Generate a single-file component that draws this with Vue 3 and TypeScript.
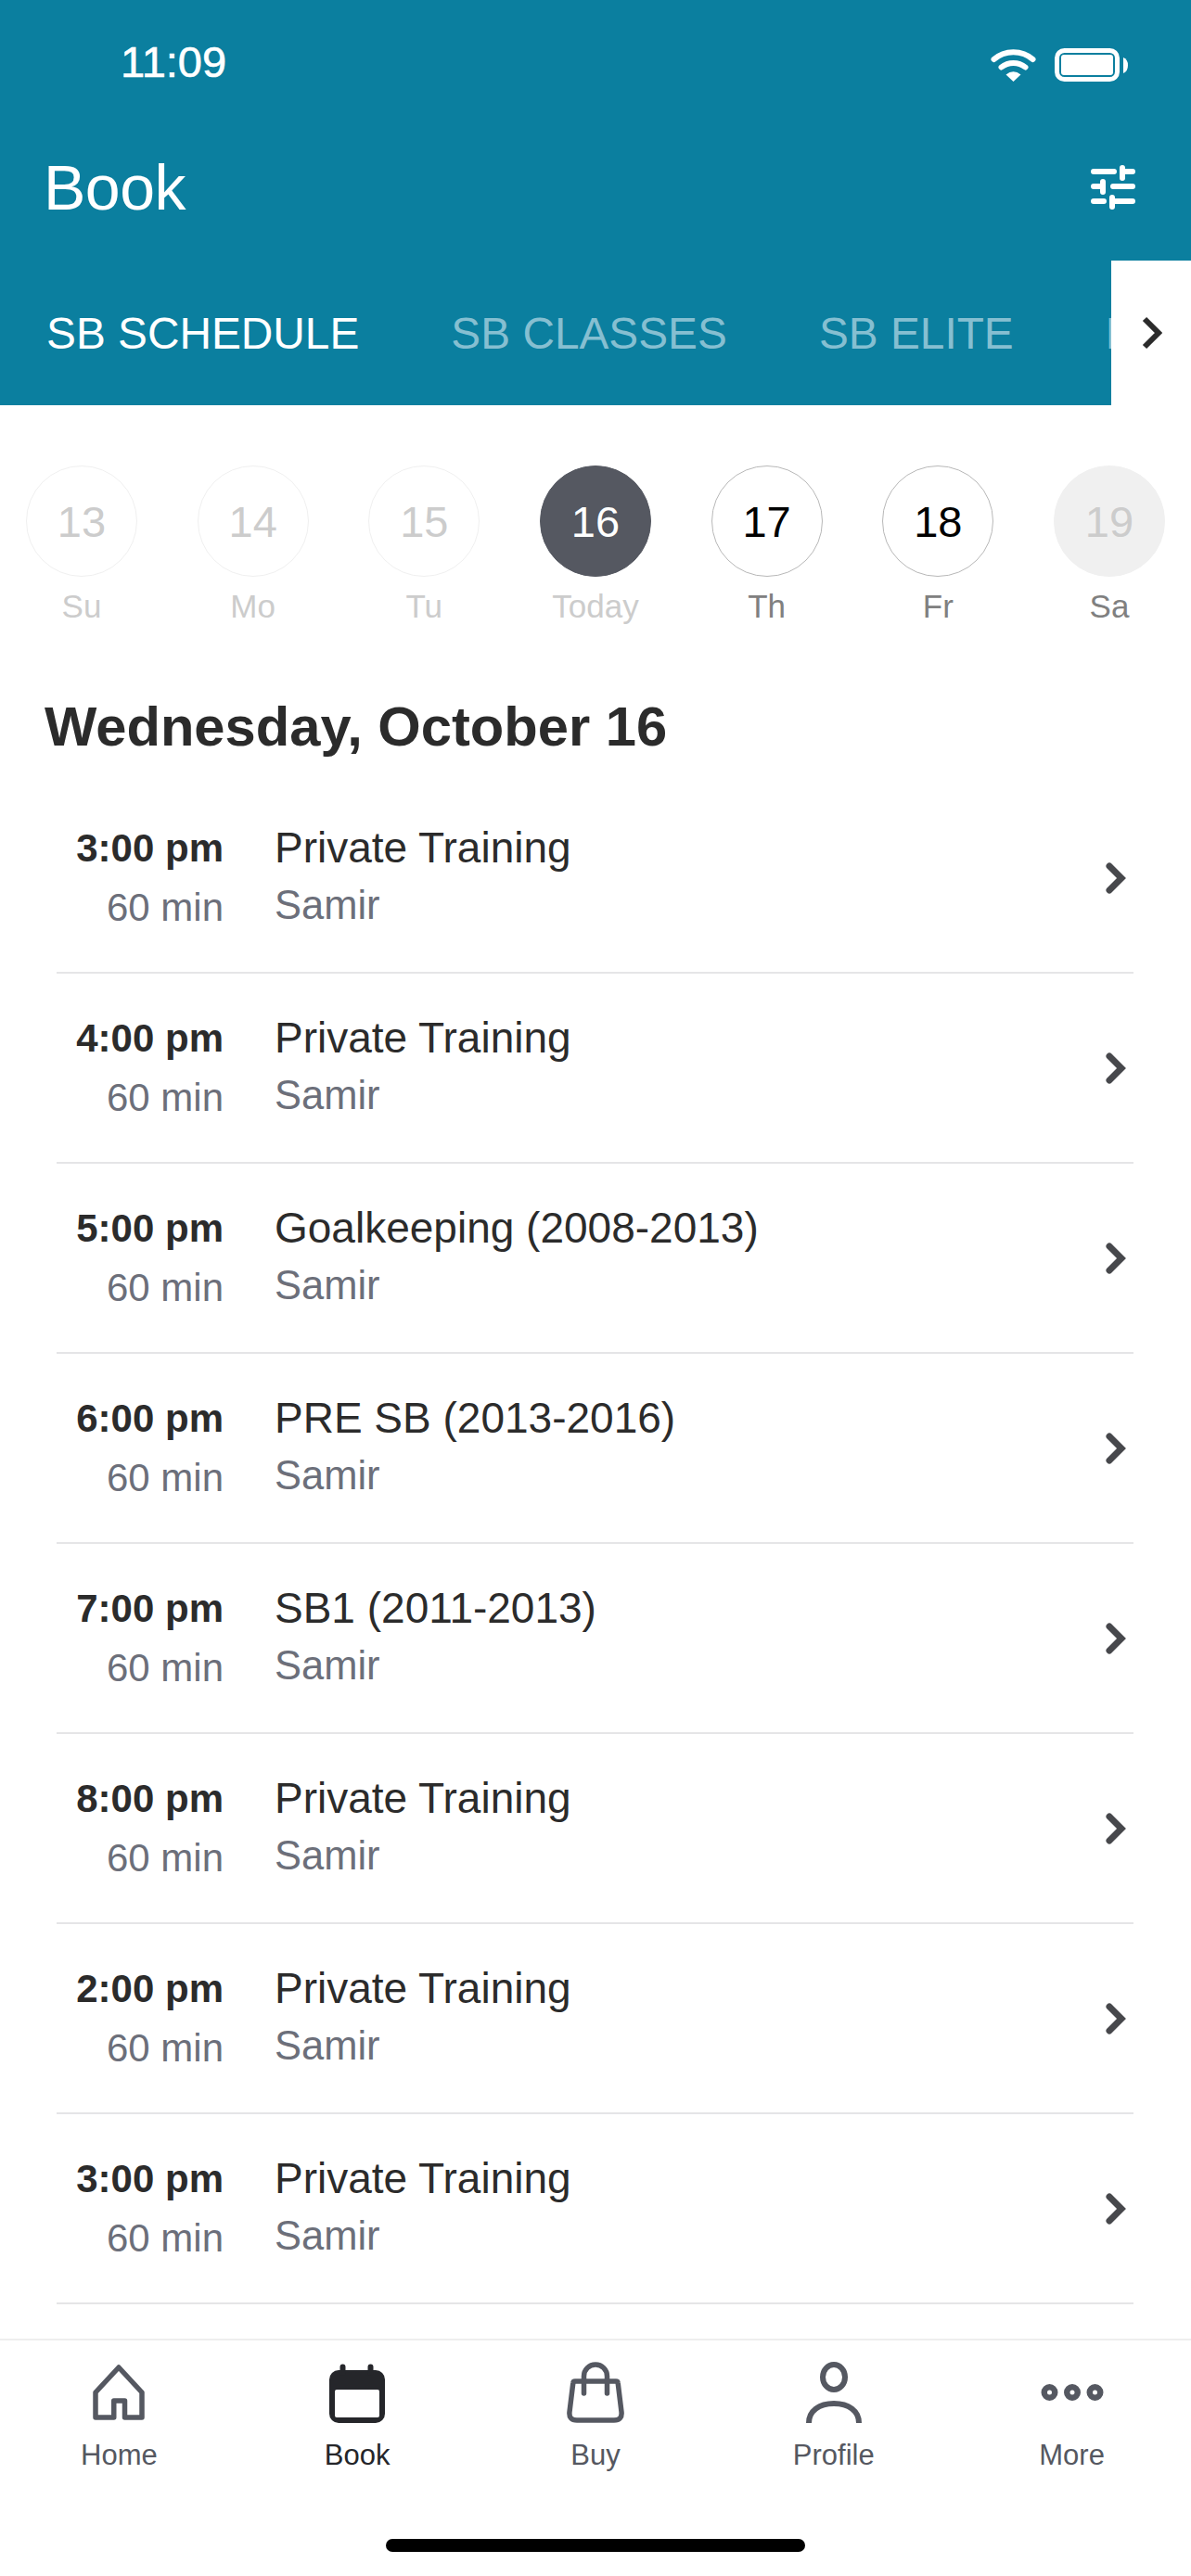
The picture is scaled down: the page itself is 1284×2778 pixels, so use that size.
<script setup lang="ts">
interface Day { num: number; label: string; state: 'past' | 'today' | 'future' | 'off' }
interface Session { time: string; title: string }

const tabs: string[] = ['SB SCHEDULE', 'SB CLASSES', 'SB ELITE', 'PRIVATE']
const days: Day[] = [
  { num: 13, label: 'Su', state: 'past' },
  { num: 14, label: 'Mo', state: 'past' },
  { num: 15, label: 'Tu', state: 'past' },
  { num: 16, label: 'Today', state: 'today' },
  { num: 17, label: 'Th', state: 'future' },
  { num: 18, label: 'Fr', state: 'future' },
  { num: 19, label: 'Sa', state: 'off' }
]
const sessions: Session[] = [
  { time: '3:00 pm', title: 'Private Training' },
  { time: '4:00 pm', title: 'Private Training' },
  { time: '5:00 pm', title: 'Goalkeeping (2008-2013)' },
  { time: '6:00 pm', title: 'PRE SB (2013-2016)' },
  { time: '7:00 pm', title: 'SB1 (2011-2013)' },
  { time: '8:00 pm', title: 'Private Training' },
  { time: '2:00 pm', title: 'Private Training' },
  { time: '3:00 pm', title: 'Private Training' }
]
</script>

<template>
  <div class="app">
    <header class="header">
      <div class="status">
        <span class="clock">11:09</span>
        <div class="status-icons">
          <svg width="49" height="36" viewBox="0 0 49 36" fill="none">
            <path d="M3.5 12 C15 1.5 34 1.5 45.5 12" stroke="#fff" stroke-width="6" stroke-linecap="round" />
            <path d="M11.5 20.5 C19 14.5 30 14.5 37.5 20.5" stroke="#fff" stroke-width="6" stroke-linecap="round" />
            <path d="M24.5 36 L16.5 28.5 Q24.5 22 32.5 28.5 Z" fill="#fff" />
          </svg>
          <svg width="79" height="36" viewBox="0 0 79 36" fill="none">
            <rect x="2.5" y="2.5" width="65" height="31" rx="8" stroke="#fff" stroke-width="5" />
            <rect x="7" y="7" width="56" height="22" rx="3" fill="#fff" />
            <path d="M74 10 Q79 12 79 18.5 Q79 25 74 27 Z" fill="#fff" />
          </svg>
        </div>
      </div>
      <div class="title-row">
        <h1 class="title">Book</h1>
        <svg width="48" height="48" viewBox="0 0 48 48" fill="none" stroke="#fff" stroke-width="6" stroke-linecap="round">
          <path d="M3 7 H25 M34 3 V14 M34 7 H45" />
          <path d="M3 23 H12 M13 18 V29 M24 23 H45" />
          <path d="M3 39 H14 M23 35 V45 M23 39 H45" />
        </svg>
      </div>
      <nav class="tabs">
        <span v-for="(tab, i) in tabs" :key="tab" class="tab" :class="{ active: i === 0 }">{{ tab }}</span>
        <div class="tabs-more">
          <svg width="22" height="36" viewBox="0 0 22 36" fill="none">
            <path d="M3 3 L18 18 L3 33" stroke="#2b2b2b" stroke-width="6" />
          </svg>
        </div>
      </nav>
    </header>

    <main class="content">
      <div class="days">
        <div v-for="day in days" :key="day.num" class="day" :class="day.state">
          <div class="circle">{{ day.num }}</div>
          <div class="day-label">{{ day.label }}</div>
        </div>
      </div>

      <h2 class="date">Wednesday, October 16</h2>

      <ul class="list">
        <li v-for="(s, i) in sessions" :key="i" class="row">
          <div class="when">
            <div class="time">{{ s.time }}</div>
            <div class="dur">60 min</div>
          </div>
          <div class="what">
            <div class="name">{{ s.title }}</div>
            <div class="coach">Samir</div>
          </div>
          <svg class="chev" width="22" height="34" viewBox="0 0 22 34" fill="none">
            <path d="M4 4 L17 17 L4 30" stroke="#47484c" stroke-width="7" stroke-linecap="round" stroke-linejoin="miter" />
          </svg>
        </li>
      </ul>
    </main>

    <footer class="nav">
      <div class="nav-items">
        <div class="nav-item">
          <svg width="60" height="66" viewBox="0 0 60 66" fill="none" stroke="#555861" stroke-width="5.5" stroke-linejoin="round">
            <path d="M5 33 L30 6 L55 33 V60 H36.5 V42 H24.75 V60 H5 Z" />
          </svg>
          <span>Home</span>
        </div>
        <div class="nav-item current">
          <svg width="60" height="66" viewBox="0 0 60 66">
            <rect x="0" y="9" width="60" height="57" rx="10" fill="#25262a" />
            <rect x="6" y="30" width="48" height="30" rx="2" fill="#fff" />
            <path d="M14.5 5.5 V12 M44.5 5.5 V12" stroke="#25262a" stroke-width="6" stroke-linecap="round" />
          </svg>
          <span>Book</span>
        </div>
        <div class="nav-item">
          <svg width="62" height="66" viewBox="0 0 62 66" fill="none" stroke="#555861" stroke-width="5.5" stroke-linecap="round" stroke-linejoin="round">
            <path d="M9 21 H53 Q55 21 55.2 23 L59 54 Q60 63 51 63 H11 Q2 63 3 54 L6.8 23 Q7 21 9 21 Z" />
            <path d="M18.5 34 V15.5 a12.5 12.5 0 0 1 25 0 V34" />
          </svg>
          <span>Buy</span>
        </div>
        <div class="nav-item">
          <svg width="60" height="66" viewBox="0 0 60 66" fill="none" stroke="#555861" stroke-width="6">
            <ellipse cx="30" cy="16.5" rx="12" ry="13.5" />
            <path d="M3 66 C3 53 14 45 30 45 C46 45 57 53 57 66" />
          </svg>
          <span>Profile</span>
        </div>
        <div class="nav-item">
          <svg width="68" height="66" viewBox="0 0 68 66" fill="none" stroke="#555861" stroke-width="6.5">
            <circle cx="9.5" cy="33" r="5.75" />
            <circle cx="34" cy="33" r="5.75" />
            <circle cx="58.5" cy="33" r="5.75" />
          </svg>
          <span>More</span>
        </div>
      </div>
      <div class="home-bar"></div>
    </footer>
  </div>
</template>

<style scoped>
.app {
  width: 1284px;
  height: 2778px;
  display: flex;
  flex-direction: column;
  overflow: hidden;
  background: #fff;
  font-family: "Liberation Sans", Arial, sans-serif;
  color: #2b2b2b;
}

.header {
  flex: none;
  background: #0b7f9f;
  color: #fff;
}
.status {
  height: 130px;
  padding: 2px 68px 0 130px;
  box-sizing: border-box;
  display: flex;
  align-items: center;
  justify-content: space-between;
}
.clock {
  font-size: 47px;
  -webkit-text-stroke: 0.6px #fff;
}
.status-icons {
  display: flex;
  align-items: center;
  gap: 20px;
  margin-top: 8px;
}
.title-row {
  height: 151px;
  box-sizing: border-box;
  padding: 0 60px 8px 47px;
  display: flex;
  align-items: center;
  justify-content: space-between;
}
.title {
  margin: 0;
  font-size: 68px;
  letter-spacing: -0.5px;
  font-weight: 400;
}
.tabs {
  position: relative;
  height: 156px;
  box-sizing: border-box;
  padding-left: 50px;
  display: flex;
  align-items: center;
  gap: 99px;
  overflow: hidden;
  white-space: nowrap;
}
.tab {
  font-size: 47.8px;
  color: #86bfd1;
}
.tab.active {
  color: #fff;
}
.tabs-more {
  position: absolute;
  top: 0;
  right: 0;
  bottom: 0;
  width: 86px;
  background: #fff;
  display: flex;
  align-items: center;
  padding-left: 33px;
  box-sizing: border-box;
}

.content {
  flex: 1;
  min-height: 0;
  overflow: hidden;
}
.days {
  padding: 65px 28px 0;
  display: flex;
  justify-content: space-between;
}
.day {
  width: 120px;
  display: flex;
  flex-direction: column;
  align-items: center;
}
.circle {
  width: 120px;
  height: 120px;
  box-sizing: border-box;
  border-radius: 50%;
  border: 1.5px solid #f0f0f0;
  display: flex;
  align-items: center;
  justify-content: center;
  font-size: 47px;
  color: #cccccc;
}
.day-label {
  margin-top: 12px;
  font-size: 35px;
  line-height: 40px;
  color: #cccccc;
}
.today .circle {
  background: #555861;
  border-color: #555861;
  color: #fff;
}
.future .circle {
  border-color: #b8b8b8;
  color: #000;
}
.off .circle {
  background: #f0f0f0;
  border-color: #f0f0f0;
}
.future .day-label,
.off .day-label {
  color: #808080;
}

.date {
  margin: 0;
  padding: 75px 48px 26px;
  font-size: 59.7px;
  line-height: 70px;
  font-weight: 700;
  color: #2b2b2b;
}

.list {
  list-style: none;
  margin: 0 62px 0 61px;
  padding: 0;
}
.row {
  height: 205px;
  box-sizing: border-box;
  border-bottom: 2px solid #e5e5e7;
  display: flex;
  align-items: center;
}
.when {
  width: 180px;
  flex: none;
  text-align: right;
  line-height: 64px;
}
.time {
  font-size: 42px;
  font-weight: 700;
}
.dur {
  font-size: 42px;
  color: #6c6f7a;
}
.what {
  flex: 1;
  margin-left: 55px;
  padding-bottom: 4px;
  line-height: 64px;
}
.name {
  font-size: 46px;
  color: #2b2b2b;
}
.coach {
  font-size: 43.5px;
  color: #6c6f7a;
  margin-top: -2px;
}
.chev {
  flex: none;
  margin-right: 8px;
}

.nav {
  flex: none;
  height: 256px;
  box-sizing: border-box;
  border-top: 2px solid #eeeeee;
  padding-top: 23px;
  display: flex;
  flex-direction: column;
  align-items: center;
}
.nav-items {
  width: 100%;
  display: flex;
}
.nav-item {
  flex: 1;
  display: flex;
  flex-direction: column;
  align-items: center;
  font-size: 31px;
  line-height: 40px;
  color: #555861;
}
.nav-item span {
  margin-top: 15px;
}
.nav-item.current {
  color: #25262a;
}
.home-bar {
  margin-top: 70px;
  width: 452px;
  height: 14px;
  border-radius: 7px;
  background: #000;
}
</style>
